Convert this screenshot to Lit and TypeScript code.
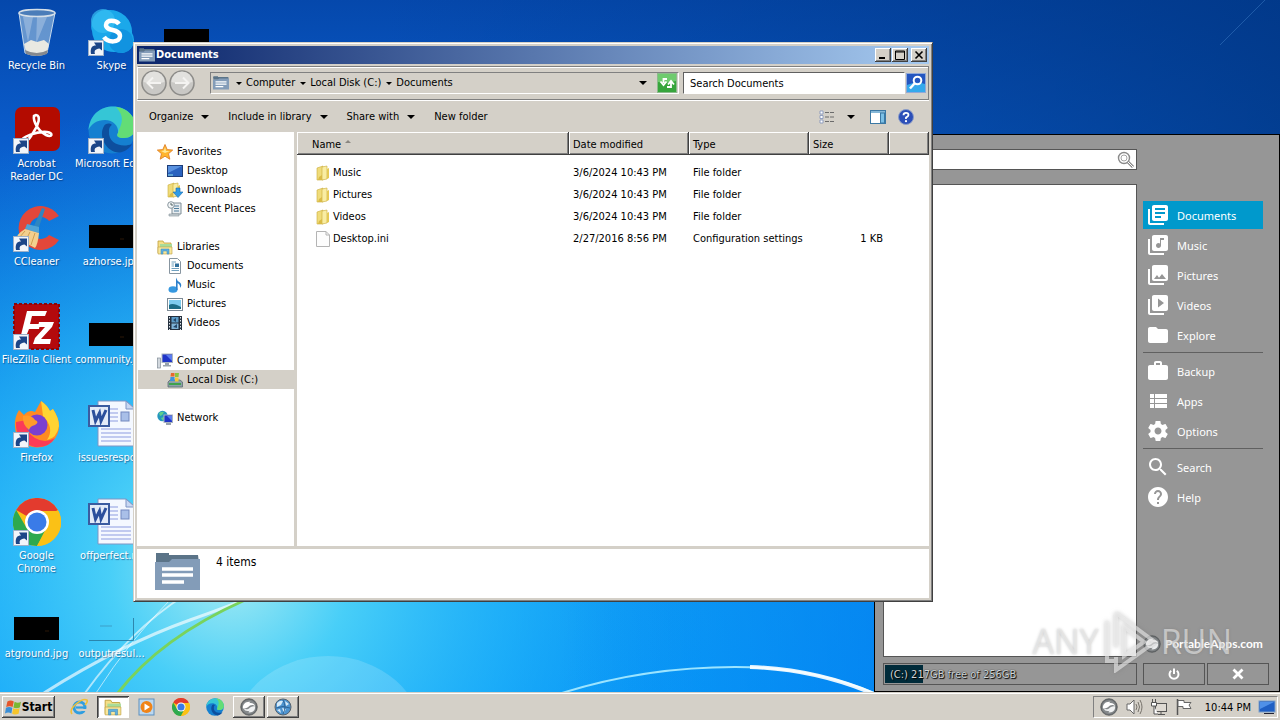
import { LitElement, html, svg, css, nothing } from "lit";
import { customElement, property } from "lit/decorators.js";
import { classMap } from "lit/directives/class-map.js";

const shortcut = svg`<g><rect x="0.5" y="32.5" width="15" height="15" fill="#f2f5fa" stroke="#9db0c8"/>
  <path d="M3 46C2 40 4 37.500 8 37.500L6 34.500H14V42.500L11.500 40.500C7 41 6 43 7 46Z" fill="#1c4587"/></g>`;

const wordDoc = svg`<path d="M10 1H38L47 9V46H10Z" fill="#f4f8ff" stroke="#7e95c4"/>
  <path d="M38 1V9H47Z" fill="#c9d8f2" stroke="#7e95c4"/>
  <path d="M13 29H43M13 33H43M13 37H43M13 41H43M22 9H30M22 13H30M22 17H30M22 21H30" stroke="#8d9ce0" stroke-width="1"/>
  <rect x="33" y="12" width="8" height="9" fill="#a9bfe8" stroke="#7388bf"/>
  <rect x="1" y="6" width="20" height="20" fill="#e3ebf8" stroke="#3b5ca0" stroke-width="2"/>
  <path d="M5 10L7.500 21L11.500 13L13 21L18 10" fill="none" stroke="#2b4f9c" stroke-width="3"/>`;

const chrome = svg`<circle cx="24" cy="24" r="24" fill="#fbc116"/>
  <path d="M24 24L3.200 12A24 24 0 0 1 44.800 12Z" fill="#e33b2e"/>
  <path d="M3.200 12A24 24 0 0 0 24 48L34.400 30L24 24L13.600 30Z" fill="#2da94f"/>
  <path d="M24 13H45.500A24 24 0 0 1 24 48L33.500 29.500Z" fill="#fbc116"/>
  <circle cx="24" cy="24" r="12" fill="#fff"/><circle cx="24" cy="24" r="9.500" fill="#3a7be8"/>`;

const edge = svg`<circle cx="24" cy="24" r="23.500" fill="#1580d0"/>
  <path d="M0.500 24C2 8 13 0.500 25 0.500C39 0.500 47.500 11 47.500 21C47.500 29 41 32 36 32C30 32 28 30 30 27C31 20 25 14 17 14C9 14 3 18 0.500 24Z" fill="#35c6d6"/>
  <path d="M28 1C40 2 47.500 11 47.500 21C47.500 29 41 32 36 32C30 32 28 30 30 27C33 18 38 12 28 1Z" fill="#63dd76"/>
  <path d="M16 20C10 30 18 46 31 46.500C37 46 42 42 44 38C34 42 20 38 21 25C21 20 24 19 24 19C21 16 17 18 16 20Z" fill="#0d4f9e"/>`;

const folderStack = svg`<path d="M1 3L7 1V15H1Z" fill="#f0dc7a" stroke="#c9ab3a" stroke-width=".6"/>
  <path d="M6 2L11 1V14L6 15Z" fill="#f9eda2" stroke="#c9ab3a" stroke-width=".6"/>
  <path d="M11 4L13 3V13L11 14Z" fill="#e5c955"/><path d="M3 12L6 10L6 15H2Z" fill="#dabb46"/>`;

const libraries = svg`<path d="M1 2H6L7 4H14V14H1Z" fill="#f5df86" stroke="#c0a03c" stroke-width=".8"/>
  <path d="M3 5H15V8H3Z" fill="#a8dc9a"/><path d="M1 8H15V15H1Z" fill="#f8e79c" stroke="#c0a03c" stroke-width=".6"/>
  <path d="M4 15V10H12V15H10V12H6V15Z" fill="#5fb0e0" stroke="#3a88b8" stroke-width=".5"/>`;

const docsFolder = svg`<path d="M1 0H14V6H1Z" fill="#5b7488"/><path d="M1 2H43L44 10H1Z" fill="#5b7488"/>
  <path d="M0 9L14 9L17 6H45V37H0Z" fill="#839cb8"/>
  <path d="M7 16H38M7 22H38M7 29H29" stroke="#fff" stroke-width="3.400"/>`;

const swirl = svg`<circle cx="12" cy="12" r="11" fill="#6e7275" stroke="#4c5052"/>
  <circle cx="12" cy="12" r="9.500" fill="#85898b"/>
  <path d="M4 14C3 8 8 4 14 5L12 7C16 6 20 8 20 11C17 8 13 10 11 12C9 14 6 14 4 14Z" fill="#fff"/>
  <path d="M20 11C21 17 16 20 11 19L13 17C9 18 6 17 5 14C8 16 11 15 13 13C15 11 18 11 20 11Z" fill="#f0f2f3"/>`;

const flag = svg`<path d="M3 4Q7 1.500 11 4L9.500 11Q6 9 1.500 11Z" fill="#e5562a"/>
  <path d="M12 4.500Q16 7 20 4.500L18.500 11.500Q14 13.500 10.500 11.500Z" fill="#7ab833"/>
  <path d="M1.200 12Q5 10 9.200 12L8 19Q4 17 0 19Z" fill="#3b8fd6"/>
  <path d="M10.200 12.500Q14 14.500 18.200 12.500L17 19.500Q12 21.500 9 19.500Z" fill="#f7c52b"/>`;

const icons: Record<string, { box: string; art: unknown }> = {
  recycle: { box: "0 0 48 48", art: svg`
    <path d="M6 5L12 45Q24 50 34 45L42 5Z" fill="#8db4da" fill-opacity=".7" stroke="#c4d8ec"/>
    <path d="M10 9L15 34L20 9ZM24 9L23 36L34 9Z" fill="#fff" opacity=".25"/>
    <path d="M11 36L18 32L24 34L31 32L36 36L34 44Q24 49 13 44Z" fill="#e9e9e2"/>
    <path d="M12 42Q24 48 35 42L34 46Q24 50 13 46Z" fill="#85898e"/>
    <ellipse cx="24" cy="5" rx="18" ry="3.500" fill="#4b7db9" stroke="#d5dfe8" stroke-width="1.500"/>` },
  skype: { box: "0 0 48 48", art: svg`
    <path d="M4 14A14 14 0 0 1 20 2A22 22 0 0 1 44 25A13 13 0 0 1 28 44A22 22 0 0 1 4 23A12 12 0 0 1 4 14Z" fill="#1ba8ea"/>
    <circle cx="15" cy="13" r="12" fill="#37bff2" opacity=".7"/><circle cx="33" cy="33" r="12" fill="#0c86d8" opacity=".6"/>
    <path d="M31 16C28 12 18 11 18 17C18 24 32 20 32 28C32 35 20 35 16 29" fill="none" stroke="#fff" stroke-width="4.500"/>${shortcut}` },
  acrobat: { box: "0 0 48 48", art: svg`
    <rect x="2" y="1" width="45" height="44" rx="7" fill="#b30b00"/>
    <path d="M23 9C28 9 26 19 20 27C16 34 10 39 9 35C8 31 24 25 34 26C41 27 39 32 33 29C25 25 20 15 21 10Z" fill="none" stroke="#fff" stroke-width="2.600"/>${shortcut}` },
  edgeBig: { box: "0 0 48 48", art: svg`${edge}${shortcut}` },
  edge: { box: "0 0 48 48", art: edge },
  ccleaner: { box: "0 0 48 48", art: svg`
    <path d="M46 12A22 22 0 1 0 46 36L36 31A11 11 0 1 1 36 17Z" fill="#e2473a"/>
    <path d="M29 4L32 5L25 26L20 24Z" fill="#2f86c0"/><path d="M14 20L26 23L26 29L12 25Z" fill="#4fa4d6"/>
    <path d="M12 25L26 29Q25 40 22 44L5 35Q2 31 12 25Z" fill="#f3cf8e"/>
    <path d="M12 27L6 34M17 28L12 38M22 29L18 41" stroke="#cf9e50"/>${shortcut}` },
  filezilla: { box: "0 0 48 48", art: svg`
    <rect x="1" y="2" width="45" height="45" fill="#b40a0d" stroke="#8c0508" stroke-width="2" stroke-dasharray="3 2"/>
    <path d="M14 9H34L32 14H19L17 22H27L26 27H16L12 37H7Z" fill="#fff"/>
    <path d="M26 20H41L39 25L28 37H38L37 42H20L22 36L32 25H25Z" fill="#fff"/>${shortcut}` },
  firefox: { box: "0 0 48 48", art: svg`
    <path d="M6 10L11 15Q16 9 22 12L28 1Q34 5 37 11L40 9Q46 18 46 26A22 21 0 0 1 2 27Q1 18 6 10Z" fill="#ff8a22"/>
    <path d="M28 1Q34 5 37 11L40 9Q46 18 46 26Q44 38 34 40Q42 28 30 16Z" fill="#ffd333"/>
    <path d="M3 22Q2 42 22 47Q36 48 42 38Q32 44 22 38Q12 32 14 20Z" fill="#fb3b58"/>
    <circle cx="24" cy="25" r="10.500" fill="#7a3fd0"/><path d="M10 16Q18 14 22 20Q27 22 22 25Q17 26 16 30Q9 24 10 16Z" fill="#ff9c2a"/>${shortcut}` },
  chromeBig: { box: "0 0 48 48", art: svg`${chrome}${shortcut}` },
  chrome: { box: "0 0 48 48", art: chrome },
  word: { box: "0 0 48 48", art: wordDoc },
  thumb: { box: "0 0 48 48", art: svg`<rect x="1" y="21" width="45" height="23" fill="#000"/><path d="M32 35H36" stroke="#2a1606"/>` },
  ghost: { box: "0 0 48 48", art: svg`<path d="M45.500 22V44.500H1" fill="none" stroke="#26749a" opacity=".8"/><path d="M12 30H24" stroke="#3c9fc8"/>` },
  docsFolder: { box: "0 0 45 38", art: docsFolder },
  star: { box: "0 0 16 16", art: svg`<path d="M8 .5L10.200 5.600L15.700 6.100L11.500 9.700L12.800 15.200L8 12.200L3.200 15.200L4.500 9.700L.3 6.100L5.800 5.600Z" fill="#ffb52e" stroke="#e0812a" stroke-width=".9"/><path d="M8 3L9 7L13 7L8 9L4 7L7 6.500Z" fill="#ffe99a"/>` },
  desktop: { box: "0 0 16 16", art: svg`<rect x=".5" y="2.500" width="15" height="11" fill="#2a62bf" stroke="#1d3d78"/><path d="M1 3H15L1 10Z" fill="#5a92e0"/><path d="M1 12H6" stroke="#8fe0e8"/>` },
  downloads: { box: "0 0 16 16", art: svg`${folderStack}<path d="M9 6H13V10H16L11 15.500L6 10H9Z" fill="#2f9be6" stroke="#1a6cb0" stroke-width=".6"/>` },
  recent: { box: "0 0 16 16", art: svg`<path d="M5 2H14V13H5Z" fill="#e8edf0" stroke="#7f8d96"/><path d="M2 13H12V15H2Z" fill="#cbd3d8" stroke="#7f8d96" stroke-width=".6"/><path d="M7 5H12M7 7.500H12M7 10H12" stroke="#4e7d9c"/><circle cx="4" cy="4" r="3.300" fill="#f3f6f8" stroke="#8a979e"/><path d="M4 2V4H6" fill="none" stroke="#566"/>` },
  libraries: { box: "0 0 16 16", art: libraries },
  document: { box: "0 0 16 16", art: svg`<path d="M2.500 .5H10.500L13.500 3.500V15.500H2.500Z" fill="#fff" stroke="#8795a0"/><path d="M4.500 4H9M4.500 6H7M4.500 8H7M4.500 10.500H12M4.500 12.500H12" stroke="#6fa0bf"/><rect x="8" y="5.500" width="4" height="3.500" fill="#2f6f9c"/>` },
  music: { box: "0 0 16 16", art: svg`<ellipse cx="6" cy="12.500" rx="4.500" ry="3.200" fill="#3698e0"/><path d="M9 13V.5Q10 4 13 5.500Q15.500 8 13 11Q13.500 7.500 10.600 6V13Z" fill="#2c80cc"/>` },
  picture: { box: "0 0 16 16", art: svg`<rect x=".5" y="2.500" width="15" height="12" fill="#fff" stroke="#7d8b96"/><rect x="2" y="4" width="12" height="9" fill="#7ecbee"/><path d="M2 9Q6 6 14 11V13H2Z" fill="#1c6c86"/>` },
  video: { box: "0 0 16 16", art: svg`<rect x="1" y="1" width="14" height="14" fill="#25313f"/><path d="M2.500 2V15M13.500 2V15" stroke="#dfe6ec" stroke-dasharray="1.500 1.500"/><rect x="4.500" y="2" width="7" height="5.500" fill="#5c9cc8"/><rect x="4.500" y="8.500" width="7" height="5.500" fill="#7fb4d8"/><path d="M6 5L9 3V7ZM6 12L10 9V13Z" fill="#24476a"/>` },
  computer: { box: "0 0 16 16", art: svg`<rect x=".5" y="5" width="3" height="10" fill="#d2d8de" stroke="#828d98" stroke-width=".7"/><rect x="5" y="1" width="10.500" height="8.500" fill="#1f34c8" stroke="#a9b4c0"/><path d="M9 2H15V8Z" fill="#5b7cf0"/><path d="M8 10H12V12H14V13.500H6V12H8Z" fill="#98a3ad"/>` },
  disk: { box: "0 0 16 16", art: svg`<path d="M1 10L3 8H13L15.500 10V15H1Z" fill="#8da1a8" stroke="#5c6c72" stroke-width=".8"/><path d="M2 12H14" stroke="#3fa34d" stroke-width="2"/><path d="M4 1H7.500V4.500H3.500Z" fill="#e8682c"/><path d="M8 1H12L11.500 5H8Z" fill="#8bc53f"/><path d="M3.500 5H7.500V9H3Z" fill="#3f93dc"/><path d="M8 5.500H11.500V9.500H8Z" fill="#f7c936"/>` },
  network: { box: "0 0 16 16", art: svg`<circle cx="5.500" cy="6" r="5.200" fill="#2497bf"/><path d="M2 3Q5 1 7 2Q6 5 3 6ZM4 8L7 7L6 11Z" fill="#5fcf8a"/><rect x="7" y="5" width="8.500" height="7.500" fill="#1f34c8" stroke="#a9b4c0"/><path d="M10 6H15V11Z" fill="#5b7cf0"/><path d="M9 13H14V15H9Z" fill="#98a3ad"/>` },
  folder: { box: "0 0 14 16", art: folderStack },
  file: { box: "0 0 14 16", art: svg`<path d="M.5 .5H10L13.500 4V15.500H.5Z" fill="#fdfdfd" stroke="#b4b4b4"/><path d="M10 .5V4H13.500" fill="none" stroke="#b4b4b4"/>` },
  arrowLeft: { box: "0 0 26 26", art: svg`<circle cx="13" cy="13" r="12" fill="#c9c8c5" stroke="#8d8c89" stroke-width="1.500"/><path d="M2.500 12A10.500 10.500 0 0 1 23.500 12Q13 15 2.500 12Z" fill="#e2e1de"/><path d="M12 7.500L6.500 13L12 18.500M7 13H20" fill="none" stroke="#f4f3f1" stroke-width="2"/>` },
  arrowRight: { box: "0 0 26 26", art: svg`<circle cx="13" cy="13" r="12" fill="#c9c8c5" stroke="#8d8c89" stroke-width="1.500"/><path d="M2.500 12A10.500 10.500 0 0 1 23.500 12Q13 15 2.500 12Z" fill="#e2e1de"/><path d="M14 7.500L19.500 13L14 18.500M19 13H6" fill="none" stroke="#f4f3f1" stroke-width="2"/>` },
  caret: { box: "0 0 8 4", art: svg`<path d="M0 0H8L4 4Z"/>` },
  sort: { box: "0 0 8 4", art: svg`<path d="M0 4H8L4 0Z" fill="#8a8680"/>` },
  refresh: { box: "0 0 20 20", art: svg`<rect x=".5" y=".5" width="19" height="19" fill="#37a53c" stroke="#8dbb8d"/><path d="M1 1H19V8Q10 11 1 9Z" fill="#6fcb6e"/><path d="M10 6H6.500V10M3.500 8.500L6.500 12L9.500 8.500M10 14H14V10M11 11.500L14 8L17 11.500" fill="none" stroke="#fff" stroke-width="1.800"/>` },
  find: { box: "0 0 20 20", art: svg`<rect x=".5" y=".5" width="19" height="19" fill="#2456c0" stroke="#90a8d8"/><path d="M1 19V12Q10 8 19 11V19Z" fill="#35a9ec"/><circle cx="11.500" cy="7.500" r="3.800" fill="none" stroke="#fff" stroke-width="2"/><path d="M8.500 10.500L4 15.500" stroke="#fff" stroke-width="2.500"/>` },
  views: { box: "0 0 16 14", art: svg`<path d="M1 1H4V4H1ZM1 5.500H4V8.500H1ZM1 10H4V13H1Z" fill="#fff" stroke="#7e8fb8" stroke-width=".8"/><path d="M6 2.500H15M6 7H15M6 11.500H15" stroke="#6b6b6b" stroke-dasharray="4 1"/>` },
  pane: { box: "0 0 16 14", art: svg`<rect x=".5" y=".5" width="15" height="13" fill="#fff" stroke="#3b78a4"/><path d="M1 2H15" stroke="#5c9fca" stroke-width="1.500"/><rect x="10.500" y="3" width="4" height="10" fill="#7cc0e6" stroke="#3b78a4"/>` },
  help: { box: "0 0 16 16", art: svg`<circle cx="8" cy="8" r="7.500" fill="#2c4fb8" stroke="#8a9cc8"/><path d="M5.500 6.200Q5.500 3.800 8 3.800T10.500 6Q10.500 7.400 8 8.600V10" fill="none" stroke="#fff" stroke-width="1.800"/><circle cx="8" cy="12.200" r="1.100" fill="#fff"/>` },
  minimize: { box: "0 0 10 10", art: svg`<path d="M1 8H7" stroke="#000" stroke-width="2"/>` },
  maximize: { box: "0 0 10 10", art: svg`<path d="M.5 1H9.500V9.500H.5ZM.5 2H9.500" fill="none" stroke="#000"/>` },
  close: { box: "0 0 10 10", art: svg`<path d="M1.500 1.500L8.500 8.500M8.500 1.500L1.500 8.500" stroke="#000" stroke-width="1.600"/>` },
  mDocs: { box: "2 2 20 20", art: svg`<path d="M4 6H2v14c0 1.100.9 2 2 2h14v-2H4V6zm16-4H8c-1.100 0-2 .9-2 2v12c0 1.100.9 2 2 2h12c1.100 0 2-.9 2-2V4c0-1.100-.9-2-2-2zm-1 9H9V9h10v2zm-4 4H9v-2h6v2zm4-8H9V5h10v2z"/>` },
  mMusic: { box: "2 2 20 20", art: svg`<path d="M20 2H8c-1.100 0-2 .9-2 2v12c0 1.100.9 2 2 2h12c1.100 0 2-.9 2-2V4c0-1.100-.9-2-2-2zm-2 5h-3v5.500c0 1.380-1.120 2.500-2.500 2.500S10 13.880 10 12.500s1.120-2.500 2.500-2.500c.57 0 1.080.19 1.500.51V5h4v2zM4 6H2v14c0 1.100.9 2 2 2h14v-2H4V6z"/>` },
  mPictures: { box: "2 2 20 20", art: svg`<path d="M22 16V4c0-1.100-.9-2-2-2H8c-1.100 0-2 .9-2 2v12c0 1.100.9 2 2 2h12c1.100 0 2-.9 2-2zm-11-4l2.030 2.710L16 11l4 5H8l3-4zM2 6v14c0 1.100.9 2 2 2h14v-2H4V6H2z"/>` },
  mVideos: { box: "2 2 20 20", art: svg`<path d="M4 6H2v14c0 1.100.9 2 2 2h14v-2H4V6zm16-4H8c-1.100 0-2 .9-2 2v12c0 1.100.9 2 2 2h12c1.100 0 2-.9 2-2V4c0-1.100-.9-2-2-2zm-8 12.500v-9l6 4.500-6 4.500z"/>` },
  mExplore: { box: "2 2 20 20", art: svg`<path d="M10 4H4c-1.100 0-1.990.9-1.990 2L2 18c0 1.100.9 2 2 2h16c1.100 0 2-.9 2-2V8c0-1.100-.9-2-2-2h-8l-2-2z"/>` },
  mBackup: { box: "2 2 20 20", art: svg`<path d="M20 6h-4V4c0-1.110-.89-2-2-2h-4c-1.110 0-2 .89-2 2v2H4c-1.110 0-2 .89-2 2v11c0 1.110.89 2 2 2h16c1.110 0 2-.89 2-2V8c0-1.110-.89-2-2-2zm-6 0h-4V4h4v2z"/>` },
  mApps: { box: "2 2 20 20", art: svg`<path d="M4 14h4v-4H4v4zm0 5h4v-4H4v4zM4 9h4V5H4v4zm5 5h12v-4H9v4zm0 5h12v-4H9v4zM9 5v4h12V5H9z"/>` },
  mOptions: { box: "2 2 20 20", art: svg`<path d="M19.430 12.980c.04-.32.07-.64.07-.98s-.03-.66-.07-.98l2.110-1.650c.19-.15.24-.42.12-.64l-2-3.460c-.12-.22-.39-.3-.61-.22l-2.490 1c-.52-.4-1.080-.73-1.690-.98l-.38-2.650C14.460 2.180 14.250 2 14 2h-4c-.25 0-.46.18-.49.42l-.38 2.650c-.61.25-1.170.59-1.690.98l-2.490-1c-.23-.09-.49 0-.61.22l-2 3.460c-.13.22-.07.49.12.64l2.110 1.650c-.04.32-.07.65-.07.98s.03.66.07.98l-2.110 1.650c-.19.15-.24.42-.12.64l2 3.460c.12.22.39.3.61.22l2.490-1c.52.4 1.080.73 1.690.98l.38 2.650c.03.24.24.42.49.42h4c.25 0 .46-.18.49-.42l.38-2.650c.61-.25 1.170-.59 1.690-.98l2.490 1c.23.09.49 0 .61-.22l2-3.460c.12-.22.07-.49-.12-.64l-2.110-1.650zM12 15.500c-1.930 0-3.500-1.570-3.500-3.500s1.570-3.500 3.500-3.500 3.500 1.570 3.500 3.500-1.570 3.500-3.500 3.500z"/>` },
  mSearch: { box: "2 2 20 20", art: svg`<path d="M15.500 14h-.79l-.28-.27C15.410 12.590 16 11.110 16 9.500 16 5.910 13.090 3 9.500 3S3 5.910 3 9.500 5.910 16 9.500 16c1.610 0 3.090-.59 4.230-1.570l.27.28v.79l5 4.990L20.490 19l-4.990-5zm-6 0C7.010 14 5 11.990 5 9.500S7.010 5 9.500 5 14 7.010 14 9.500 11.990 14 9.500 14z"/>` },
  mHelp: { box: "2 2 20 20", art: svg`<path d="M12 2C6.480 2 2 6.480 2 12s4.480 10 10 10 10-4.480 10-10S17.520 2 12 2zm1 17h-2v-2h2v2zm2.070-7.750l-.9.920C13.450 12.900 13 13.500 13 15h-2v-.5c0-1.100.45-2.100 1.170-2.830l1.240-1.260c.37-.36.59-.86.59-1.410 0-1.100-.9-2-2-2s-2 .9-2 2H8c0-2.210 1.790-4 4-4s4 1.790 4 4c0 .88-.36 1.680-.93 2.250z"/>` },
  lens: { box: "0 0 18 18", art: svg`<circle cx="7" cy="7" r="5.500" fill="#fff" stroke="#8a8a8a" stroke-width="1.400"/><circle cx="7" cy="7" r="3" fill="none" stroke="#a5a5a5"/><path d="M11 11L16 16" stroke="#8a8a8a" stroke-width="3"/><path d="M11 11L16 16" stroke="#fff"/>` },
  swirl: { box: "0 0 24 24", art: swirl },
  power: { box: "0 0 12 12", art: svg`<path d="M3.200 2.800A4.500 4.500 0 1 0 8.800 2.800M6 .5V6" fill="none" stroke="#fff" stroke-width="2"/>` },
  cross: { box: "0 0 12 12", art: svg`<path d="M1.500 1.500L10.500 10.500M10.500 1.500L1.500 10.500" stroke="#fff" stroke-width="2.800"/>` },
  flag: { box: "0 0 20 22", art: flag },
  ie: { box: "0 0 18 18", art: svg`<circle cx="9.500" cy="9.500" r="5.500" fill="none" stroke="#2f9ee0" stroke-width="3"/><path d="M6 9.500H14" stroke="#2f9ee0" stroke-width="2.200"/><path d="M12 11H17V13H11Z" fill="#d4d0c8"/><path d="M2 16Q-1 12 6 6T17 2Q18 4 15 7" fill="none" stroke="#efc038" stroke-width="1.600"/>` },
  wmp: { box: "0 0 18 18", art: svg`<rect x="1" y="1" width="15" height="16" fill="#bcd8f0" stroke="#5d8fbe"/><circle cx="8.500" cy="9" r="6" fill="#f08418"/><path d="M6.500 5.500L12 9L6.500 12.500Z" fill="#fff"/>` },
  globe: { box: "0 0 18 18", art: svg`<circle cx="9" cy="9" r="8" fill="#4d94d0" stroke="#56616c"/><path d="M3 5Q6 2 9 3L7 7L3 9ZM11 3L15 6L12 8ZM8 10L12 11L10 15ZM3 12L6 11L7 15Z" fill="#d8ebf8"/><path d="M9 2Q13 9 9 16M2 10Q9 7 16 10" fill="none" stroke="#2e6396"/>` },
  sound: { box: "0 0 18 18", art: svg`<path d="M2 6H5L9 2V16L5 12H2Z" fill="#fff" stroke="#666"/><path d="M11 6Q13 9 11 12M13 4Q16 9 13 14M15 2Q19 9 15 16" fill="none" stroke="#77736c"/>` },
  net: { box: "0 0 18 18", art: svg`<rect x="5.500" y="5.500" width="11" height="8" fill="#dedad3" stroke="#555"/><path d="M8 16.500H15M11 14V16" stroke="#555"/><path d="M2.500 1V4M5.500 1V4M1.500 4.500H6.500V8H1.500ZM4 8V16H8" fill="#fff" stroke="#555"/>` },
  alert: { box: "0 0 18 18", art: svg`<path d="M2.500 1V17" stroke="#555" stroke-width="1.500"/><path d="M3 2.500H9V4.500H16L14 7L16 10.500H8V8.500H3Z" fill="#fff" stroke="#666"/>` },
  monitor: { box: "0 0 18 14", art: svg`<rect x="1" y="1" width="16" height="11" fill="#1f5fc4" stroke="#7c9fc8"/><path d="M2 2H16L2 9Z" fill="#4f90e8"/><path d="M6 13.500H16" stroke="#223"/>` },
};

@customElement("ui-icon")
class UiIcon extends LitElement {
  @property() name = "";
  static styles = css`
    :host { display: block; flex: none; width: 16px; height: 16px; }
    svg { display: block; width: 100%; height: 100%; fill: currentColor; }
  `;
  render() {
    const icon = icons[this.name];
    return icon ? html`<svg viewBox=${icon.box} aria-hidden="true">${icon.art}</svg>` : nothing;
  }
}

const shortcuts = [
  ["recycle", "Recycle Bin"], ["acrobat", "Acrobat Reader DC"], ["ccleaner", "CCleaner"],
  ["filezilla", "FileZilla Client"], ["firefox", "Firefox"], ["chromeBig", "Google Chrome"], ["thumb", "atground.jpg"],
  ["skype", "Skype"], ["edgeBig", "Microsoft Edge"], ["thumb", "azhorse.jpg"],
  ["thumb", "community.jpg"], ["word", "issuesrespo..."], ["word", "offperfect.rtf"], ["ghost", "outputresul..."],
  ["thumb", ""],
];

@customElement("desktop-icons")
class DesktopIcons extends LitElement {
  static styles = css`
    :host { display: block; padding-top: 8px; }
    .grid { display: grid; grid-auto-flow: column; grid-template-rows: repeat(7, 98px); grid-auto-columns: 75px; justify-content: start; }
    .item { display: flex; flex-direction: column; align-items: center; gap: 3px; min-width: 0; padding-right: 2px; color: #fff; text-decoration: none; text-align: center; line-height: 13px; text-shadow: 1px 1px 1px rgba(0, 30, 80, .5); }
    .label { max-width: 64px; }
    .label.wide { max-width: none; white-space: nowrap; }
    .icon { width: 48px; height: 48px; }
  `;
  render() {
    return html`<div class="grid">${shortcuts.map(([icon, label]) => html`
      <a class="item" href="#"><ui-icon class="icon" name=${icon}></ui-icon>
        <span class=${classMap({ label: true, wide: !/DC|Chrome/.test(label) })}>${label}</span></a>`)}</div>`;
  }
}

const navGroups = [
  { icon: "star", label: "Favorites", items: [["desktop", "Desktop"], ["downloads", "Downloads"], ["recent", "Recent Places"]] },
  { icon: "libraries", label: "Libraries", items: [["document", "Documents"], ["music", "Music"], ["picture", "Pictures"], ["video", "Videos"]] },
  { icon: "computer", label: "Computer", items: [["disk", "Local Disk (C:)"]] },
  { icon: "network", label: "Network", items: [] as string[][] },
];

const files = [
  ["folder", "Music", "3/6/2024 10:43 PM", "File folder", ""],
  ["folder", "Pictures", "3/6/2024 10:43 PM", "File folder", ""],
  ["folder", "Videos", "3/6/2024 10:43 PM", "File folder", ""],
  ["file", "Desktop.ini", "2/27/2016 8:56 PM", "Configuration settings", "1 KB"],
];

@customElement("explorer-window")
class ExplorerWindow extends LitElement {
  static styles = css`
    :host { display: flex; flex-direction: column; box-sizing: border-box; padding: 2px; background: #d4d0c8; color: #000;
      border: 1px solid; border-color: #d4d0c8 #404040 #404040 #d4d0c8; box-shadow: inset 1px 1px #fff, inset -1px -1px #808080; line-height: 14px; }
    button, input { font: inherit; color: inherit; }
    button { display: flex; align-items: center; justify-content: center; margin: 0; padding: 0; border: 0; background: none; }
    .title { display: flex; align-items: center; height: 18px; margin: 1px; padding: 0 2px; gap: 1px; background: linear-gradient(90deg, #0a246a, #a6caf0); color: #fff; }
    .title h1 { flex: 1; margin: 0; font-size: 11px; font-family: var(--bold-font); }
    .title .mark { width: 16px; height: 14px; }
    .title button { width: 16px; height: 14px; background: #d4d0c8; color: #000; box-shadow: inset -1px -1px #404040, inset 1px 1px #fff, inset -2px -2px #808080; }
    .title button ui-icon { width: 10px; height: 10px; }
    .title .shut { margin-left: 2px; }
    .nav { display: flex; align-items: center; height: 32px; margin: 1px; padding: 0 2px 0 3px; border: 1px solid #808080; border-left-color: #fff; box-shadow: inset 0 1px #fff, 0 1px #fff; }
    .nav .arrow ui-icon { width: 26px; height: 26px; }
    .nav .arrow + .arrow { margin-left: 2px; }
    .address { display: flex; align-items: center; flex: 1; height: 20px; margin-left: 15px; border: 1px solid; border-color: #808080 #fff #fff #808080; }
    .address .mark { width: 16px; height: 14px; margin: 0 7px 0 2px; }
    .crumbs { display: flex; flex: 1; }
    .crumbs button { gap: 4px; padding-right: 5px; }
    .crumbs ui-icon { width: 6px; height: 3px; }
    .caret { width: 8px; height: 4px; }
    .small { width: 20px; height: 20px; }
    .address .small { margin: 0 1px 0 10px; }
    .search { flex: none; box-sizing: border-box; width: 222px; height: 22px; margin: 0 1px 0 4px; padding: 0 6px; border: 1px solid; border-color: #606060 #fff #fff #606060; background: #fff; outline: 0; }
    .search::placeholder { color: #000; opacity: 1; }
    .commands { display: flex; align-items: center; height: 31px; padding: 0 16px 0 13px; gap: 19px; }
    .commands button { gap: 8px; }
    .commands .last { margin-left: auto; gap: 12px; }
    .commands .icon-button { margin-left: -4px; }
    .commands .icon-button + .icon-button { margin-left: -7px; }
    .panes { display: grid; grid-template-columns: 157px 1fr; gap: 3px; flex: 1; min-height: 0; margin: 0 1px; }
    .tree { padding: 10px 0 0; background: #fff; }
    .tree ul { margin: 0 0 19px; padding: 0; list-style: none; }
    .tree a { display: flex; align-items: center; gap: 4px; height: 19px; padding-left: 20px; color: inherit; text-decoration: none; }
    .tree .child { padding-left: 30px; }
    .tree .selected { background: #d4d0c8; margin-left: 1px; padding-left: 29px; }
    .files { background: #fff; overflow: hidden; }
    table { width: 100%; border-collapse: separate; border-spacing: 0; table-layout: fixed; }
    th { box-sizing: border-box; height: 23px; padding: 2px 4px 0; background: #d4d0c8; text-align: left; font-weight: normal; box-shadow: inset -1px -1px #404040, inset 1px 1px #fff, inset -2px -2px #808080; }
    th:first-child { padding-left: 15px; }
    th ui-icon { display: inline-block; width: 6px; height: 3px; margin: 0 0 5px 1px; }
    td { box-sizing: border-box; height: 22px; padding: 0 4px; white-space: nowrap; }
    tbody::before { content: ""; display: block; height: 7px; }
    td:first-child { padding-left: 19px; }
    td:last-child { padding: 0; }
    td.size { text-align: right; padding-right: 6px; }
    .name { display: flex; align-items: center; gap: 3px; }
    .name ui-icon { width: 14px; }
    .details { display: flex; gap: 16px; height: 45px; margin: 3px 1px 1px; padding: 4px 18px 0; background: #fff; font-size: 12px; line-height: 18px; }
    .details ui-icon { width: 45px; height: 38px; }
  `;
  render() {
    return html`
      <header class="title"><ui-icon class="mark" name="docsFolder"></ui-icon><h1>Documents</h1>
        <button aria-label="Minimize"><ui-icon name="minimize"></ui-icon></button>
        <button aria-label="Maximize"><ui-icon name="maximize"></ui-icon></button>
        <button class="shut" aria-label="Close"><ui-icon name="close"></ui-icon></button></header>
      <div class="nav">
        <button class="arrow" aria-label="Back"><ui-icon name="arrowLeft"></ui-icon></button>
        <button class="arrow" aria-label="Forward"><ui-icon name="arrowRight"></ui-icon></button>
        <div class="address"><ui-icon class="mark" name="docsFolder"></ui-icon>
          <div class="crumbs">${["Computer", "Local Disk (C:)", "Documents"].map((c) => html`<button><ui-icon name="caret"></ui-icon>${c}</button>`)}</div>
          <button aria-label="Previous locations"><ui-icon class="caret" name="caret"></ui-icon></button>
          <button aria-label="Refresh"><ui-icon class="small" name="refresh"></ui-icon></button></div>
        <input class="search" type="text" aria-label="Search Documents" placeholder="Search Documents">
        <button aria-label="Search"><ui-icon class="small" name="find"></ui-icon></button>
      </div>
      <div class="commands">
        ${["Organize", "Include in library", "Share with"].map((c) => html`<button>${c}<ui-icon class="caret" name="caret"></ui-icon></button>`)}
        <button>New folder</button>
        <button class="last" aria-label="Change your view"><ui-icon name="views"></ui-icon><ui-icon class="caret" name="caret"></ui-icon></button>
        <button class="icon-button" aria-label="Preview pane"><ui-icon name="pane"></ui-icon></button>
        <button class="icon-button" aria-label="Help"><ui-icon name="help"></ui-icon></button>
      </div>
      <div class="panes">
        <nav class="tree">${navGroups.map((g) => html`<ul>
          <li><a href="#"><ui-icon name=${g.icon}></ui-icon>${g.label}</a></li>
          ${g.items.map(([icon, label]) => html`<li><a href="#" class=${classMap({ child: true, selected: icon === "disk" })}><ui-icon name=${icon}></ui-icon>${label}</a></li>`)}
        </ul>`)}</nav>
        <div class="files"><table>
          <colgroup><col><col width="120"><col width="120"><col width="80"><col width="40"></colgroup>
          <thead><tr><th>Name <ui-icon name="sort"></ui-icon></th><th>Date modified</th><th>Type</th><th>Size</th><th></th></tr></thead>
          <tbody>${files.map(([icon, name, date, type, size]) => html`<tr>
            <td><span class="name"><ui-icon name=${icon}></ui-icon>${name}</span></td><td>${date}</td><td>${type}</td><td class="size">${size}</td><td></td></tr>`)}</tbody>
        </table></div>
      </div>
      <footer class="details"><ui-icon name="docsFolder"></ui-icon><span>4 items</span></footer>`;
  }
}

const menu = [
  [["mDocs", "Documents"], ["mMusic", "Music"], ["mPictures", "Pictures"], ["mVideos", "Videos"], ["mExplore", "Explore"]],
  [["mBackup", "Backup"], ["mApps", "Apps"], ["mOptions", "Options"]],
  [["mSearch", "Search"], ["mHelp", "Help"]],
];

@customElement("portable-menu")
class PortableMenu extends LitElement {
  static styles = css`
    :host { display: grid; grid-template-columns: 1fr 126px; grid-template-rows: 1fr 22px; gap: 6px; box-sizing: border-box; padding: 14px 10px 6px 8px; border: 1px solid #000; background: #969696; color: #fff; font-family: "Noto Sans", sans-serif; font-size: 11px; }
    .left { display: flex; flex-direction: column; gap: 14px; }
    .query { display: flex; align-items: center; height: 19px; padding-right: 1px; border: 1px solid #555; background: #fff; }
    .query input { flex: 1; min-width: 0; border: 0; background: none; outline: 0; }
    .query ui-icon { width: 18px; height: 18px; }
    .apps { flex: 1; border: 1px solid #555; background: #fff; }
    .right { display: flex; flex-direction: column; padding-top: 52px; }
    ul { margin: 0 6px 0 0; padding: 0 0 3px; list-style: none; display: flex; flex-direction: column; gap: 2px; }
    ul + ul { padding-top: 4px; border-top: 1px solid #606060; }
    a { display: flex; align-items: center; gap: 9px; height: 28px; padding-left: 5px; color: #fff; text-decoration: none; }
    a.active { background: #0099cc; }
    a ui-icon { width: 20px; height: 20px; }
    .brand { display: flex; align-items: center; gap: 4px; margin: auto -4px 4px 0; font-family: Lato, sans-serif; font-size: 12px; font-weight: bold; line-height: 16px; }
    .brand ui-icon { width: 18px; height: 18px; }
    .space { display: flex; align-items: center; box-sizing: border-box; padding-left: 6px; border: 1px solid #555; background: linear-gradient(#002b3a, #002b3a) no-repeat 1px 1px / 38px 18px; text-shadow: 0 0 1px #000, 1px 1px 1px #000; font-family: var(--ui-font); color: #d0d6d8; }
    .buttons { display: grid; grid-template-columns: 1fr 1fr; gap: 2px; }
    button { display: grid; place-items: center; padding: 0; border: 1px solid #555; background: none; }
    button ui-icon { width: 12px; height: 12px; }
  `;
  render() {
    return html`
      <div class="left"><div class="query"><input type="text" aria-label="Search apps"><ui-icon name="lens"></ui-icon></div><div class="apps"></div></div>
      <div class="right">${menu.map((group) => html`<ul>${group.map(([icon, label]) => html`
        <li><a href="#" class=${classMap({ active: label === "Documents" })}><ui-icon name=${icon}></ui-icon>${label}</a></li>`)}</ul>`)}
        <div class="brand"><ui-icon name="swirl"></ui-icon>PortableApps.com</div></div>
      <div class="space">(C:) 217GB free of 256GB</div>
      <div class="buttons"><button aria-label="Power"><ui-icon name="power"></ui-icon></button><button aria-label="Close"><ui-icon name="cross"></ui-icon></button></div>`;
  }
}

@customElement("task-bar")
class TaskBar extends LitElement {
  static styles = css`
    :host { display: flex; align-items: center; height: 26px; padding: 0 2px; border-top: 1px solid #fff; box-shadow: 0 -1px #d4d0c8; background: #d4d0c8; color: #000; }
    button { display: flex; align-items: center; justify-content: center; box-sizing: border-box; height: 22px; width: 32px; margin: 0 1px; padding: 0; border: 0; background: none; font: inherit; color: inherit; }
    .raised { box-shadow: inset -1px -1px #404040, inset 1px 1px #fff, inset -2px -2px #808080; }
    .pressed { background: #fff; box-shadow: inset 1px 1px #404040, inset -1px -1px #fff, inset 2px 2px #808080; }
    .start { width: 53px; gap: 1px; margin: 0 7px 0 0; font-family: var(--bold-font); font-size: 12px; font-weight: bold; }
    ui-icon { width: 18px; height: 18px; }
    .start ui-icon { width: 16px; }
    .tray { display: flex; align-items: center; gap: 7px; box-sizing: border-box; height: 22px; margin-left: auto; padding: 0 1px 0 6px; border: 1px solid; border-color: #808080 #fff #fff #808080; }
    time { margin-left: 5px; }
  `;
  render() {
    const apps = [["ie", "Internet Explorer", ""], ["libraries", "Windows Explorer", "pressed"], ["wmp", "Media Player", ""], ["chrome", "Google Chrome", ""], ["edge", "Microsoft Edge", ""], ["swirl", "PortableApps", "raised"], ["globe", "Network tool", "raised"]];
    return html`
      <button class="start raised"><ui-icon name="flag"></ui-icon>Start</button>
      ${apps.map(([icon, label, kind]) => html`<button class=${kind} aria-label=${label}><ui-icon name=${icon}></ui-icon></button>`)}
      <div class="tray">${["swirl", "sound", "net", "alert"].map((i) => html`<ui-icon name=${i}></ui-icon>`)}<time>10:44 PM</time><ui-icon name="monitor"></ui-icon></div>`;
  }
}

@customElement("app-root")
class AppRoot extends LitElement {
  static styles = css`
    :host { --ui-font: Tahoma, "DejaVu Sans Condensed", "Noto Sans", sans-serif; --bold-font: "DejaVu Sans Condensed", "Noto Sans", sans-serif;
      display: grid; grid-template-rows: 1fr auto; height: 100vh; font-family: var(--ui-font); font-size: 11px; overflow: hidden; }
    .desktop { position: relative; min-height: 0; overflow: hidden; background: #0a6fd8; }
    .wallpaper { position: absolute; inset: 0; width: 100%; height: 100%; }
    desktop-icons { position: relative; }
    portable-menu { position: absolute; right: 0; bottom: 1px; width: 406px; height: 558px; }
    explorer-window { position: absolute; left: 133px; top: 42px; width: 800px; height: 560px; }
    .watermark { position: absolute; right: 48px; bottom: 20px; display: flex; align-items: center; gap: 3px; font-family: "Open Sans", sans-serif; font-size: 34px; line-height: 64px; color: rgba(236, 236, 236, .6); text-shadow: 0 0 3px rgba(110, 110, 110, .4); pointer-events: none; }
    .watermark svg { width: 56px; height: 64px; filter: drop-shadow(0 0 2px rgba(110, 110, 110, .6)); }
    task-bar { position: relative; }
  `;
  render() {
    return html`
      <main class="desktop">
        <svg class="wallpaper" viewBox="0 0 1280 693" preserveAspectRatio="none" aria-hidden="true">
          <defs>
            <linearGradient id="sky" x1="0" y1="0" x2="0" y2="1"><stop offset="0" stop-color="#0548ac"/><stop offset=".2" stop-color="#0a5ccb"/><stop offset=".5" stop-color="#0c84e4"/><stop offset=".75" stop-color="#10a0f4"/><stop offset="1" stop-color="#0a9cf8"/></linearGradient>
            <radialGradient id="glow" gradientUnits="userSpaceOnUse" cx="230" cy="570" r="480"><stop offset="0" stop-color="#a8ecf2"/><stop offset=".25" stop-color="#4fd4f8" stop-opacity=".9"/><stop offset=".6" stop-color="#2cbcfa" stop-opacity=".5"/><stop offset="1" stop-color="#1090f0" stop-opacity="0"/></radialGradient>
            <linearGradient id="dark" x1="0" y1="0" x2="1" y2="0"><stop offset=".3" stop-color="#003a8c" stop-opacity="0"/><stop offset="1" stop-color="#00347f" stop-opacity=".75"/></linearGradient>
            <linearGradient id="deep" x1="0" y1="0" x2="1" y2="0"><stop offset="0" stop-color="#0078ee" stop-opacity="0"/><stop offset="1" stop-color="#0078ee" stop-opacity=".6"/></linearGradient>
          </defs>
          <rect width="1280" height="693" fill="url(#sky)"/>
          <rect width="1280" height="600" fill="url(#dark)"/>
          <rect width="1280" height="693" fill="url(#glow)"/>
          <rect x="560" y="590" width="320" height="103" fill="url(#deep)"/>
          <ellipse cx="328" cy="740" rx="96" ry="84" fill="#fff" opacity=".16"/>
          <g fill="none">
            <path d="M44 693Q120 645 190 620T290 580" stroke="#fff" stroke-width="3" opacity=".65"/>
            <path d="M85 693Q130 630 185 595" stroke="#fff" stroke-width="2" opacity=".6"/>
            <path d="M96 693Q130 640 170 600" stroke="#fff" stroke-width="1" opacity=".6"/>
            <path d="M118 693Q160 638 245 600" stroke="#79d35c" stroke-width="3"/>
            <path d="M562 693Q645 667 735 667Q812 667 874 693" stroke="#9be4ff" stroke-width="2"/>
            <path d="M750 667Q815 669 874 694" stroke="#fff" stroke-width="4" opacity=".9"/>
            <path d="M1220 45L1265 0" stroke="#3b7cc4" opacity=".5"/>
          </g>
        </svg>
        <desktop-icons></desktop-icons>
        <portable-menu></portable-menu>
        <explorer-window></explorer-window>
        <div class="watermark" aria-hidden="true">ANY<svg viewBox="0 0 56 64"><path d="M14 4L53 33L14 61V48M5 12V52H12M14 4V38M22 18L42 33L22 47Z" fill="none" stroke="#ececec" stroke-opacity=".6" stroke-width="4"/></svg>RUN</div>
      </main>
      <task-bar></task-bar>`;
  }
}
